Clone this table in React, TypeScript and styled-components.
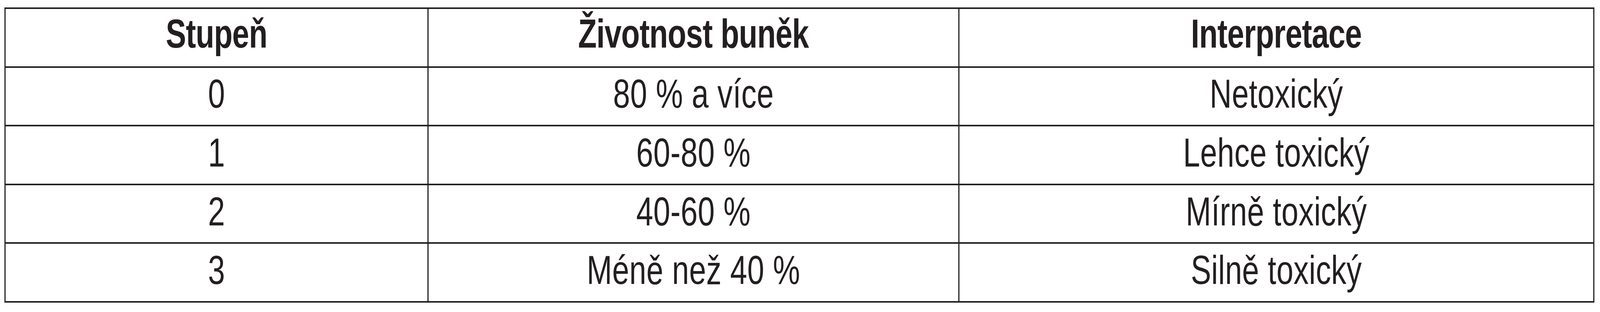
import React, { useEffect, useState } from 'react';
import styled, { createGlobalStyle } from 'styled-components';

// the sheet is drawn at the reference width and squeezed to the window
const DESIGN_WIDTH = 5413;

const GlobalStyle = createGlobalStyle`
  html, body {
    margin: 0;
    padding: 0;
    background: #ffffff;
    overflow: hidden;
  }
`;

const Viewport = styled.div`
  width: 100vw;
  height: 100vh;
  overflow: hidden;
`;

const Sheet = styled.div`
  width: ${DESIGN_WIDTH}px;
  padding: 19px 0 0 15px;
  box-sizing: border-box;
  transform-origin: 0 0;
  font-family: 'Liberation Sans', Arial, sans-serif;
  color: #231f20;
`;

// the grid gap doubles as the table rules
const Table = styled.div`
  display: grid;
  width: max-content;
  grid-template-columns: 1427px 1792px 2144px;
  grid-auto-rows: 146.6px;
  gap: 4px;
  padding: 4px;
  background: #231f20;
`;

const Cell = styled.div<{ $head?: boolean }>`
  display: flex;
  align-items: center;
  justify-content: center;
  background: #ffffff;
  font-size: 103px;
  line-height: 1;
  white-space: nowrap;
  font-weight: ${({ $head }) => ($head ? 700 : 400)};
  letter-spacing: ${({ $head }) => ($head ? '-1px' : '0.5px')};
  padding-bottom: ${({ $head }) => ($head ? '20px' : '12px')};
  box-sizing: border-box;
`;

const head = ['Stupeň', 'Životnost buněk', 'Interpretace'];

const rows = [
  ['0', '80 % a více', 'Netoxický'],
  ['1', '60-80 %', 'Lehce toxický'],
  ['2', '40-60 %', 'Mírně toxický'],
  ['3', 'Méně než 40 %', 'Silně toxický'],
];

const useSqueeze = () => {
  const [ratio, setRatio] = useState(() => Math.min(1, window.innerWidth / DESIGN_WIDTH));
  useEffect(() => {
    const onResize = () => setRatio(Math.min(1, window.innerWidth / DESIGN_WIDTH));
    window.addEventListener('resize', onResize);
    return () => window.removeEventListener('resize', onResize);
  }, []);
  return ratio;
};

const App = () => {
  const ratio = useSqueeze();

  return (
    <>
      <GlobalStyle />
      <Viewport>
        <Sheet style={{ transform: `scale(${ratio}, 1)` }}>
          <Table>
            {head.map(h => (
              <Cell $head key={h}>
                {h}
              </Cell>
            ))}
            {rows.map(row => row.map((value, i) => <Cell key={`${row[0]}-${i}`}>{value}</Cell>))}
          </Table>
        </Sheet>
      </Viewport>
    </>
  );
};

export default App;
